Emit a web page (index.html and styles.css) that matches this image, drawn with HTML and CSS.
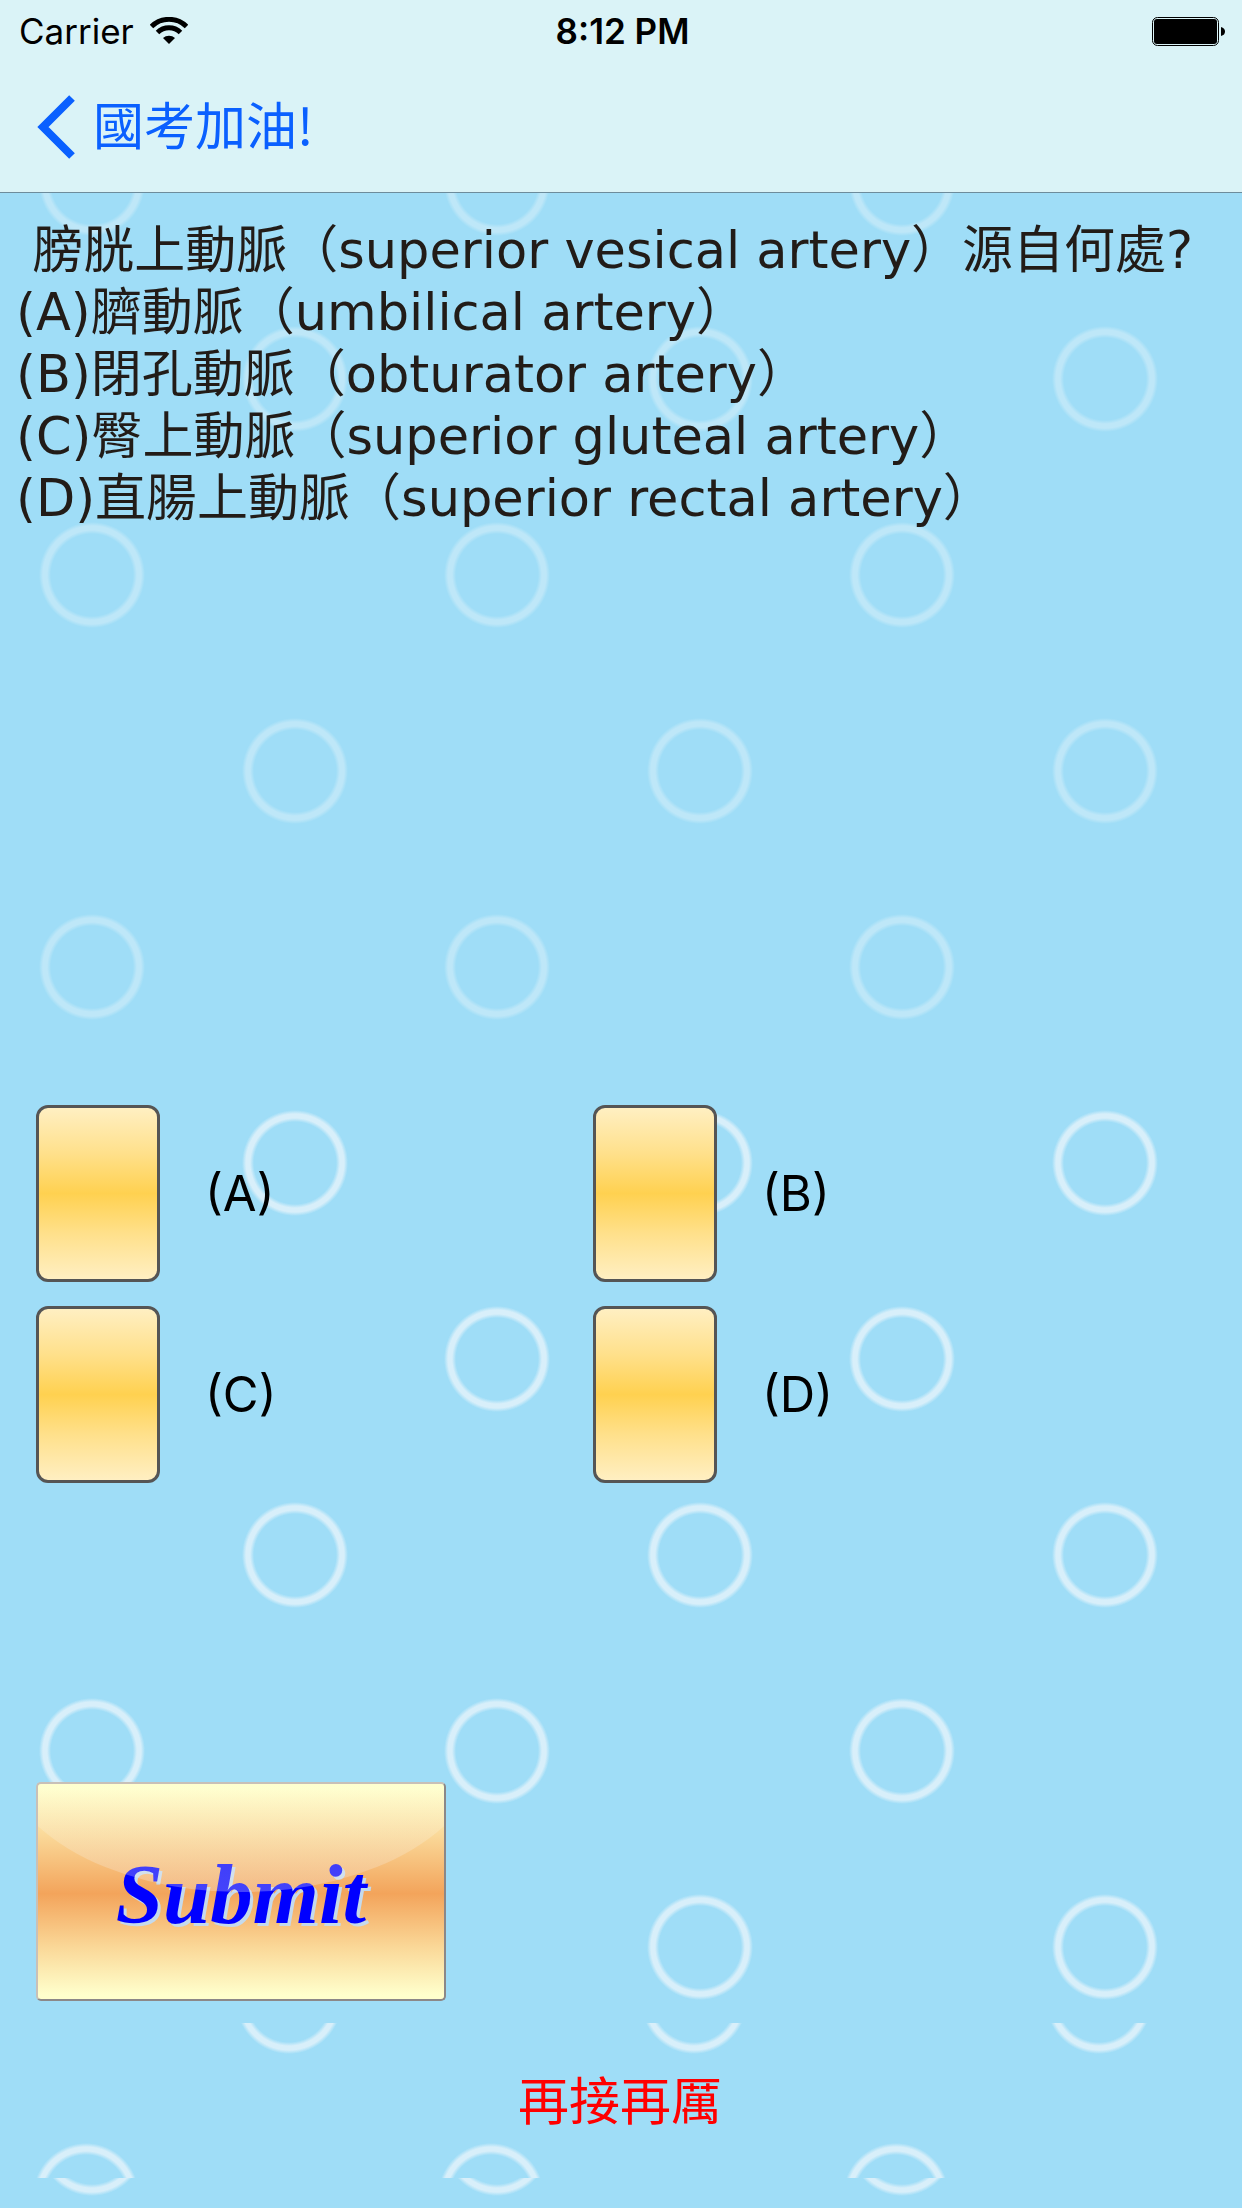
FILE: index.html
```html
<!DOCTYPE html>
<html lang="zh-Hant">
<head>
<meta charset="utf-8">
<meta name="viewport" content="width=device-width, initial-scale=1">
<title>國考加油!</title>
<link rel="stylesheet" href="styles.css">
</head>
<body>
<header class="topbar">
  <div class="status">
    <div class="status-left">
      <span>Carrier</span>
      <svg class="wifi" viewBox="0 0 38 28" aria-hidden="true">
        <path d="M1.500 9.500 A25 25 0 0 1 36.500 9.500" fill="none" stroke="#000" stroke-width="5"/>
        <path d="M7.500 15.500 A16.500 16.500 0 0 1 30.500 15.500" fill="none" stroke="#000" stroke-width="5"/>
        <path d="M13 21 A9 9 0 0 1 25 21 L19 27 Z" fill="#000"/>
      </svg>
    </div>
    <time class="status-time">8:12 PM</time>
    <div class="status-right">
      <svg class="battery" viewBox="0 0 74 29" aria-hidden="true">
        <rect x="0.500" y="0.500" width="66" height="28" rx="5" fill="none" stroke="#000"/>
        <rect x="2" y="2" width="63" height="25" rx="3" fill="#000"/>
        <path d="M69 10 Q73 11 73 14.500 Q73 18 69 19 Z" fill="#000"/>
      </svg>
    </div>
  </div>
  <nav class="nav">
    <a class="back" href="#">
      <svg class="chevron" viewBox="0 0 38 64" aria-hidden="true">
        <path d="M35 3 L6 32 L35 61" fill="none" stroke="#0a60ff" stroke-width="8"/>
      </svg>
      <span class="back-title">國考加油!</span>
    </a>
  </nav>
</header>
<main class="quiz">
  <section class="question">&nbsp;膀胱上動脈（superior vesical artery）源自何處?
(A)臍動脈（umbilical artery）
(B)閉孔動脈（obturator artery）
(C)臀上動脈（superior gluteal artery）
(D)直腸上動脈（superior rectal artery）</section>
  <form class="answers">
    <div class="options">
      <label class="option"><input class="box" type="checkbox" name="a">(A)</label>
      <label class="option"><input class="box" type="checkbox" name="b">(B)</label>
      <label class="option"><input class="box" type="checkbox" name="c">(C)</label>
      <label class="option"><input class="box" type="checkbox" name="d">(D)</label>
    </div>
    <button class="submit" type="button">Submit</button>
  </form>
</main>
<footer class="result">再接再厲</footer>
</body>
</html>
```
FILE: styles.css
```css
:root {
  --sky: #9fddf7;
  --ring: #d8effa;
  --bubble: radial-gradient(circle at 202px 196px, transparent 41px, var(--ring) 45px, var(--ring) 49px, transparent 53px);
}

* {
  box-sizing: border-box;
}

body {
  margin: 0;
  min-height: 100vh;
  display: flex;
  flex-direction: column;
  color: #000;
  font-family: Inter, "Noto Sans CJK TC", sans-serif;
  background-color: var(--sky);
  background-image: var(--bubble), var(--bubble);
  background-size: 405px 392px;
  background-position: -110px -13px, 93px 183px;
}

.topbar {
  height: 193px;
  background: #daf3f7;
  border-bottom: 1px solid #6d8c9c;
}

.status {
  display: grid;
  grid-template-columns: 1fr auto 1fr;
  align-items: center;
  height: 62px;
  padding: 0 16px 0 19px;
  font-size: 35px;
  line-height: 60px;
}

.status-left {
  display: flex;
  align-items: center;
  gap: 16px;
}

.wifi {
  width: 38px;
  height: 28px;
}

.status-time {
  font-weight: 600;
}

.status-right {
  display: flex;
  justify-content: flex-end;
}

.battery {
  width: 74px;
  height: 29px;
}

.nav {
  display: flex;
  align-items: center;
  height: 130px;
  padding: 0 37px;
}

.back {
  display: flex;
  align-items: center;
  gap: 18px;
  color: #0a60ff;
  font-family: "Noto Sans CJK TC", sans-serif;
  font-size: 51px;
  line-height: 60px;
  text-decoration: none;
}

.back-title {
  padding-bottom: 8px;
}

.chevron {
  width: 38px;
  height: 64px;
}

.quiz {
  flex: 1;
}

.question {
  min-height: 872px;
  padding: 27px 16px;
  color: #221c18;
  background: rgba(159, 221, 247, 0.45);
  font-family: "DejaVu Sans", "Noto Sans CJK TC", sans-serif;
  font-size: 51px;
  line-height: 62px;
  white-space: pre-line;
}

.answers {
  padding: 40px 36px 22px;
}

.options {
  display: grid;
  grid-template-columns: 557px 1fr;
  row-gap: 24px;
}

.option {
  display: flex;
  align-items: center;
  gap: 45px;
  font-size: 49px;
}

.box {
  appearance: none;
  width: 124px;
  height: 177px;
  margin: 0;
  border: 3px solid #555;
  border-radius: 12px;
  background: linear-gradient(#ffefc2, #ffe08a 27%, #ffd150 50%, #ffe08a 73%, #ffefc2);
}

.submit {
  position: relative;
  display: block;
  overflow: hidden;
  width: 410px;
  height: 219px;
  margin-top: 299px;
  padding: 4px 0 0;
  border: 2px solid;
  border-color: #c8c0b8 #8c8888 #8c8888 #c8c0b8;
  border-radius: 5px;
  background: linear-gradient(#ffc 2%, #fad898 24%, #f3a45b 51%, #fad898 76%, #ffc 98%);
  color: #00f;
  font: italic bold 85px/100px "Liberation Serif", serif;
  text-shadow: 3px 3px 0 #c5daec;
}

/* Glass highlight over the top half of the button */
.submit::after {
  content: "";
  position: absolute;
  left: -10%;
  bottom: 50%;
  width: 120%;
  height: 296px;
  border-radius: 50%;
  background: linear-gradient(rgba(255, 255, 220, 0.2) 63%, rgba(245, 240, 240, 0.28));
}

.result {
  height: 155px;
  margin-bottom: 30px;
  padding-right: 2px;
  color: #f00;
  background-color: var(--sky);
  background-image: var(--bubble), var(--bubble);
  background-size: 405px 392px;
  background-position: -116px -23px, 87px 174px;
  font-family: "Noto Sans CJK TC", sans-serif;
  font-size: 51px;
  line-height: 150px;
  text-align: center;
}
```
